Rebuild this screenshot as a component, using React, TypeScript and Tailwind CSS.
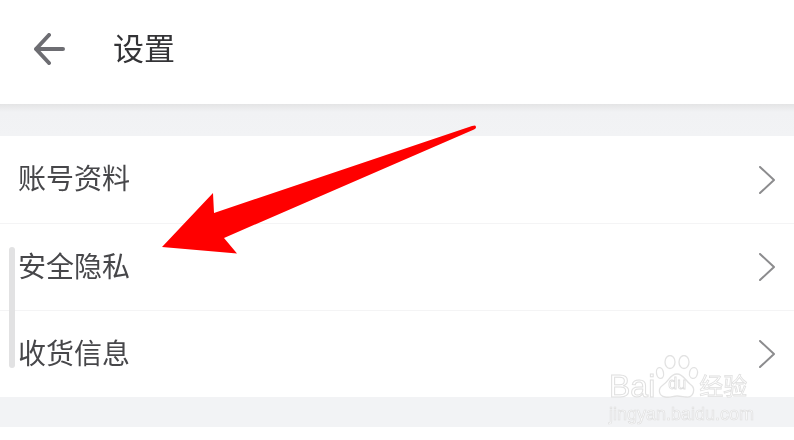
const rows = ["账号资料", "安全隐私", "收货信息"];

function Chevron() {
  return (
    <svg width="20" height="30" viewBox="0 0 20 30" fill="none" stroke="#8c8c8e" strokeWidth="2" strokeLinecap="round" strokeLinejoin="round" className="blur-[0.4px]">
      <path d="M2 2 L16 15 L2 28" />
    </svg>
  );
}

function Paw() {
  return (
    <svg width="44" height="44" viewBox="0 0 44 44" fill="none" stroke="#e2e2e2" strokeWidth="1.3">
      <ellipse cx="5" cy="18" rx="3.5" ry="5.5" transform="rotate(-10 5 18)" />
      <ellipse cx="15" cy="7" rx="5" ry="6.5" />
      <ellipse cx="29" cy="7" rx="5" ry="6.5" />
      <ellipse cx="38.5" cy="18" rx="4" ry="5.5" transform="rotate(10 38.5 18)" />
      <path d="M22 19 C28 19 30 25 35 29 C42 34 38 43 31 42 C27 41.5 25 41 22 41 C18 41 15 43 10 42 C4 41 2 34 8 30 C14 26 15 19 22 19 Z" />
    </svg>
  );
}

export default function App() {
  return (
    <div className="relative w-[794px] h-[440px] overflow-hidden bg-white font-['Liberation_Sans','Noto_Sans_CJK_SC',sans-serif]">
      <header className="flex h-[104px] items-center pb-[5px]">
        <svg width="36" height="36" viewBox="0 0 36 36" fill="none" stroke="#6d6d72" strokeWidth="4" strokeLinecap="round" strokeLinejoin="round" className="ml-[32px] blur-[0.4px]">
          <path d="M4 17 H31 M17 3 L4 17 L17 31" />
        </svg>
        <h1 className="ml-[45px] text-[31px] leading-none font-normal text-[#333336] blur-[0.4px]">设置</h1>
      </header>

      <div className="h-[32px] bg-gradient-to-b from-[#e4e4e5] via-[#f1f2f4] via-[25%] to-[#f2f3f5]" />

      <main>
        {rows.map((label, i) => (
          <div key={label} className={`flex h-[87px] items-center justify-between pl-[18px] pr-[16px] ${i > 0 ? "border-t border-[#f4f4f5]" : ""}`}>
            <span className="pt-[1px] text-[28px] leading-none text-[#47474a] blur-[0.4px]">{label}</span>
            <Chevron />
          </div>
        ))}
      </main>

      <div className="h-[30px] bg-[#f2f3f5]" />

      {/* Scroll indicator */}
      <div className="absolute left-[9px] top-[247px] h-[121px] w-[6px] rounded-[3px] bg-[#e2e2e3]" />

      {/* Red annotation arrow */}
      <svg className="absolute left-0 top-0" width="794" height="440" viewBox="0 0 794 440">
        <path
          d="M475 125.5 Q477.5 127.5 474 129.5 L224 238 L237 253.5 L162 247 L213 193 L214 213 L472 126 Z"
          fill="#ff0000"
        />
      </svg>

      {/* Watermark */}
      <div className="absolute left-[609px] top-[355px] flex w-[145px] flex-col gap-[8px] blur-[0.3px]">
        <div className="flex items-end">
          <span className="text-[32px] leading-[26px] text-white/70 [-webkit-text-stroke:1px_#e0e0e0]">Bai</span>
          <div className="relative h-[44px] w-[44px]">
            <Paw />
            <span className="absolute inset-x-0 bottom-[7px] text-center text-[16px] leading-none text-transparent [-webkit-text-stroke:0.8px_#dedede]">du</span>
          </div>
          <span className="text-[24px] leading-[25px] text-white/70 [-webkit-text-stroke:0.8px_#e0e0e0]">经验</span>
        </div>
        <span className="whitespace-nowrap text-[18px] leading-[14px] text-white/70 [-webkit-text-stroke:0.7px_#e0e0e0]">jingyan.baidu.com</span>
      </div>
    </div>
  );
}
